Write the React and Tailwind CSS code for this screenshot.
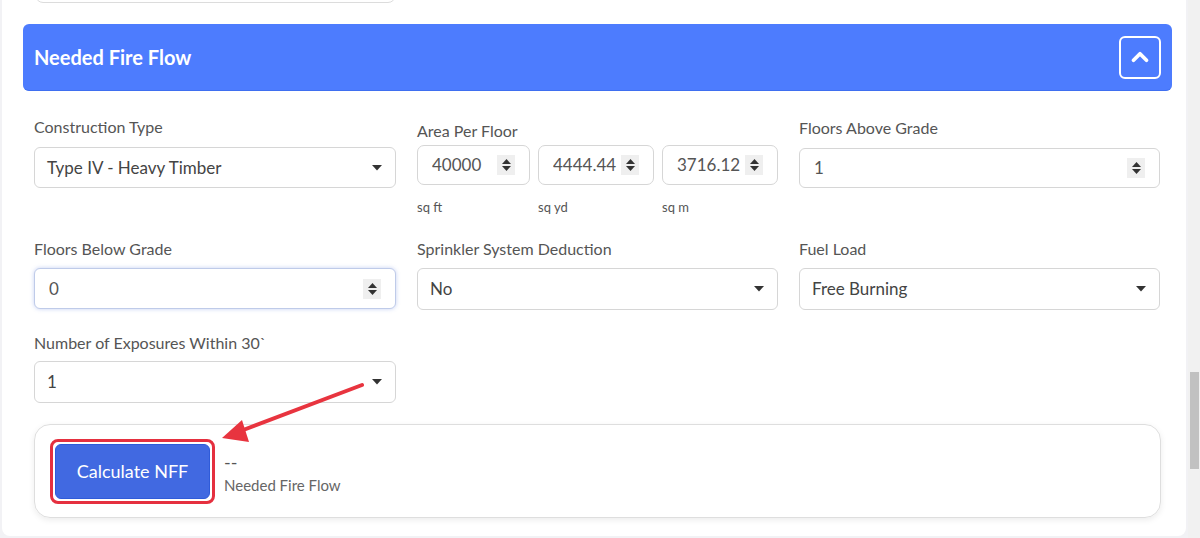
import { ChevronUp } from 'lucide-react'

const Caret = () => (
  <svg width="10" height="6" viewBox="0 0 10 6" className="shrink-0">
    <path d="M0 0 L10 0 L5 5.5 Z" fill="#333" />
  </svg>
)

const Spinner = () => (
  <div className="w-[18px] h-[20px] bg-[#efefef] flex flex-col items-center justify-center gap-[2px] shrink-0">
    <svg width="9" height="5" viewBox="0 0 9 5"><path d="M0 5 L4.5 0 L9 5 Z" fill="#333" /></svg>
    <svg width="9" height="5" viewBox="0 0 9 5"><path d="M0 0 L9 0 L4.5 5 Z" fill="#333" /></svg>
  </div>
)

const Label = ({ children, className = '' }) => (
  <div className={`text-[16px] leading-[20px] text-[#555] ${className}`}>{children}</div>
)

const Select = ({ value, className = '' }) => (
  <div className={`h-[41px] border border-[#d6d6d6] rounded-[6px] bg-white flex items-center justify-between pl-[12px] pr-[13px] text-[17px] text-[#444] ${className}`}>
    <span>{value}</span>
    <Caret />
  </div>
)

const NumberInput = ({ value, className = '', focused = false }) => (
  <div
    className={`h-[40px] rounded-[6px] bg-white flex items-center pl-[14px] pr-[14px] text-[17px] text-[#555] ${
      focused ? 'border border-[#bfcbe9] shadow-[0_0_4px_rgba(90,120,220,0.35)]' : 'border border-[#d6d6d6]'
    } ${className}`}
  >
    <span className="flex-1 min-w-0 overflow-hidden whitespace-nowrap">{value}</span>
    <Spinner />
  </div>
)

const AreaInput = ({ value, unit }) => (
  <div className="flex flex-col">
    <div className="h-[40px] border border-[#d6d6d6] rounded-[7px] bg-white flex items-center pl-[14px] pr-[14px] text-[17px] text-[#555]">
      <span className="flex-1 min-w-0 overflow-hidden whitespace-nowrap">{value}</span>
      <Spinner />
    </div>
    <div className="mt-[14px] text-[13px] leading-[16px] text-[#555]">{unit}</div>
  </div>
)

export default function App() {
  return (
    <div className="w-[1200px] h-[538px] overflow-hidden bg-[#f2f2f5] flex font-['Lato','Noto_Sans',sans-serif]">
      <div className="relative ml-[2px] w-[1184px] h-[536px] bg-white rounded-b-[8px] pl-[21px] pr-[14px]">
        {/* bottom of previous field */}
        <div className="ml-[12px] w-[361px] h-[40px] -mt-[37px] border border-[#dcdcdc] rounded-[8px] bg-white" />

        {/* Header */}
        <div className="mt-[21px] h-[67px] bg-[#4d7cfe] rounded-[6px] border-b border-[#3f6ff0] flex items-center justify-between pl-[11px] pr-[11px]">
          <h2 className="text-[20px] font-bold text-white">Needed Fire Flow</h2>
          <button className="w-[42px] h-[43px] border-2 border-white rounded-[6px] flex items-center justify-center">
            <ChevronUp className="w-[26px] h-[26px] text-white" strokeWidth={3.5} />
          </button>
        </div>

        <div className="px-[11px]">
          {/* Row 1 */}
          <div className="mt-[26px] grid grid-cols-[362px_361px_361px] gap-x-[21px] items-start">
            <div>
              <Label>Construction Type</Label>
              <Select value="Type IV - Heavy Timber" className="mt-[10px]" />
            </div>
            <div className="pt-[4px]">
              <Label>Area Per Floor</Label>
              <div className="mt-[4px] grid grid-cols-[113px_116px_116px] gap-x-[8px]">
                <AreaInput value="40000" unit="sq ft" />
                <AreaInput value="4444.44" unit="sq yd" />
                <AreaInput value="3716.12" unit="sq m" />
              </div>
            </div>
            <div className="pt-[1px]">
              <Label>Floors Above Grade</Label>
              <NumberInput value="1" className="mt-[10px]" />
            </div>
          </div>

          {/* Row 2 */}
          <div className="mt-[24px] grid grid-cols-[362px_361px_361px] gap-x-[21px] items-start">
            <div>
              <Label>Floors Below Grade</Label>
              <NumberInput value="0" focused className="mt-[9px] h-[41px]" />
            </div>
            <div>
              <Label>Sprinkler System Deduction</Label>
              <Select value="No" className="mt-[9px] h-[42px]" />
            </div>
            <div>
              <Label>Fuel Load</Label>
              <Select value="Free Burning" className="mt-[9px] h-[42px]" />
            </div>
          </div>

          {/* Row 3 */}
          <div className="mt-[23px] grid grid-cols-[362px_361px_361px] gap-x-[21px] items-start">
            <div>
              <Label>Number of Exposures Within 30`</Label>
              <Select value="1" className="mt-[8px] h-[42px]" />
            </div>
          </div>

          {/* Result card */}
          <div className="mt-[21px] h-[94px] border border-[#dedede] rounded-[16px] shadow-[0_2px_6px_rgba(0,0,0,0.08)] flex items-center pl-[15px]">
            <div className="border-[3px] border-[#e5303f] rounded-[8px] p-[2px]">
              <button className="w-[155px] h-[55px] bg-[#4169e1] border border-[#2f5bd9] rounded-[6px] text-white text-[18px]">
                Calculate NFF
              </button>
            </div>
            <div className="ml-[9px] mt-[4px] flex flex-col">
              <span className="text-[18px] leading-[20px] text-[#555]">--</span>
              <span className="text-[15px] leading-[20px] text-[#666] mt-[3px]">Needed Fire Flow</span>
            </div>
          </div>
        </div>

        {/* annotation arrow */}
        <svg className="absolute left-0 top-0 pointer-events-none" width="1184" height="536">
          <line x1="360" y1="385" x2="236" y2="432" stroke="#e8343f" strokeWidth="4" strokeLinecap="round" />
          <path d="M220 438 L240 420 L247 442 Z" fill="#e8343f" />
        </svg>
      </div>

      {/* scrollbar */}
      <div className="ml-[2px] w-[12px] h-full bg-[#f1f1f1] flex justify-center">
        <div className="mt-[372px] w-[9px] h-[97px] bg-[#c1c1c1]" />
      </div>
    </div>
  )
}
